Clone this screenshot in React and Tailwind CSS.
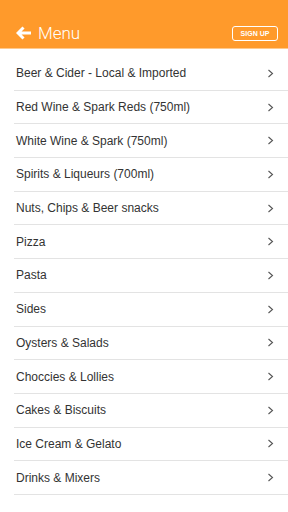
const categorias = [
  "Beer & Cider - Local & Imported",
  "Red Wine & Spark Reds (750ml)",
  "White Wine & Spark (750ml)",
  "Spirits & Liqueurs (700ml)",
  "Nuts, Chips & Beer snacks",
  "Pizza",
  "Pasta",
  "Sides",
  "Oysters & Salads",
  "Choccies & Lollies",
  "Cakes & Biscuits",
  "Ice Cream & Gelato",
  "Drinks & Mixers",
];

function Chevron() {
  return (
    <svg width="7" height="9" viewBox="0 0 7 9" fill="none">
      <path d="M1.5 1l4 3.5-4 3.5" stroke="#555" strokeWidth="1.1" />
    </svg>
  );
}

export default function App() {
  return (
    <div className="w-[288px] h-[512px] bg-white overflow-hidden font-['Liberation_Sans',Arial,sans-serif]">
      <header className="h-[49px] bg-[#ff9a2b] border-b border-[#ffc98c] flex items-end pb-[7px] px-[16px]">
        <div className="flex items-center w-full h-[16px]">
          <svg width="16" height="14" viewBox="0 0 16 14" className="mr-[6px]">
            <path d="M7.5 1.5L2 7l5.5 5.5M2.5 7H15" stroke="#fff" strokeWidth="3" fill="none" strokeLinejoin="miter" />
          </svg>
          <span className="text-white text-[17px] font-['Roboto'] font-light leading-none">Menu</span>
          <button className="ml-auto mr-[-6px] h-[15px] w-[46px] justify-center border-[1.5px] border-white rounded-[3px] text-white text-[7px] font-bold leading-none flex items-center">
            SIGN UP
          </button>
        </div>
      </header>
      <ul className="pt-[8px]">
        {categorias.map((c) => (
          <li
            key={c}
            className="h-[33.7px] ml-[14px] border-b border-[#e3e3e3] flex items-center justify-between pl-[2px] pr-[14px]"
          >
            <span className="text-[12px] text-[#333]">{c}</span>
            <Chevron />
          </li>
        ))}
      </ul>
    </div>
  );
}
